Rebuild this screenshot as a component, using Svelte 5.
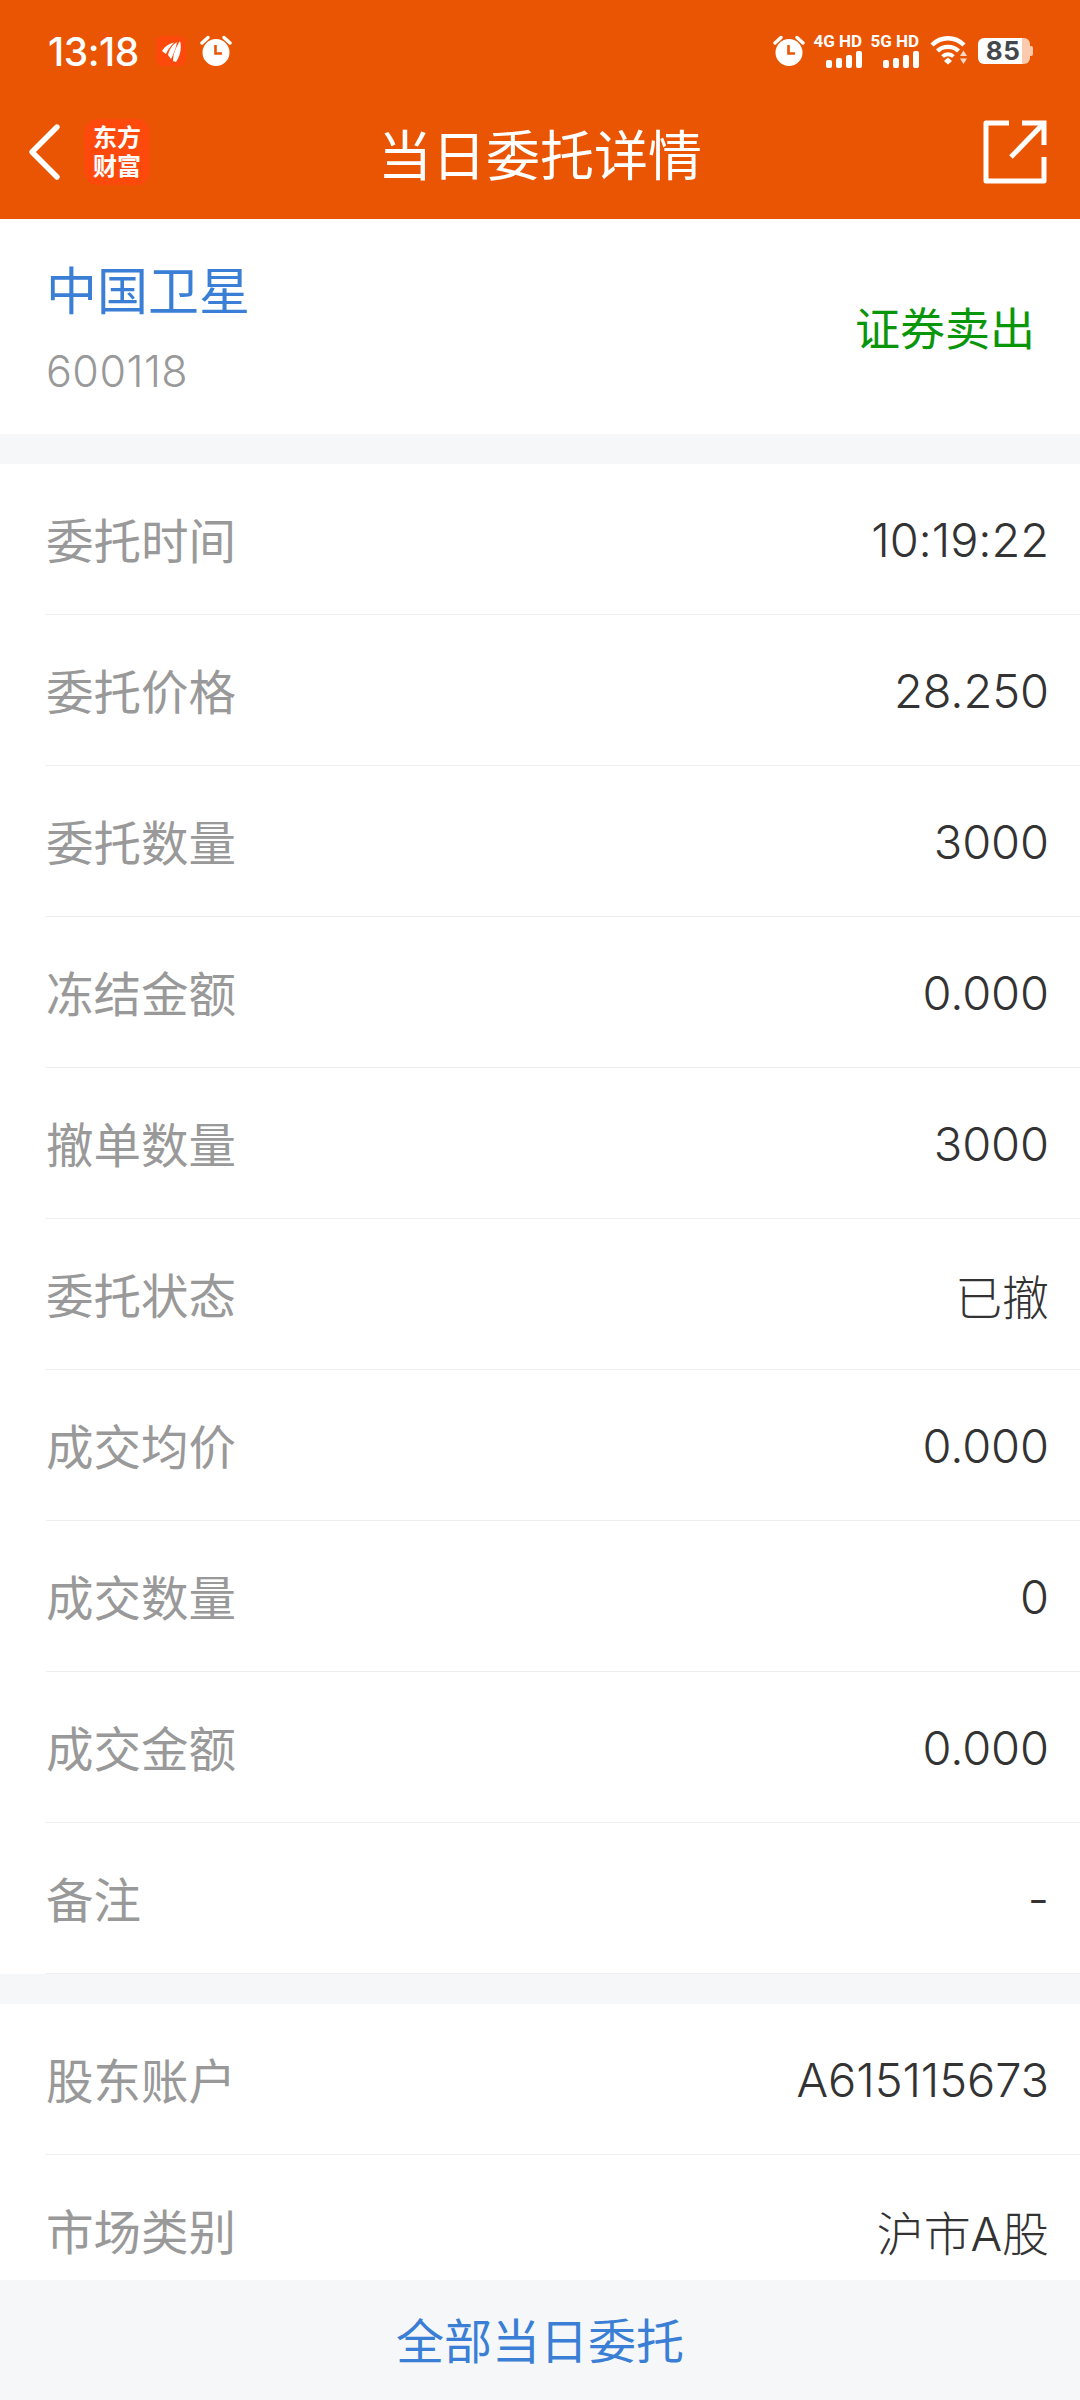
<script>
	const mainRows = [
		['委托时间', '10:19:22'],
		['委托价格', '28.250'],
		['委托数量', '3000'],
		['冻结金额', '0.000'],
		['撤单数量', '3000'],
		['委托状态', '已撤'],
		['成交均价', '0.000'],
		['成交数量', '0'],
		['成交金额', '0.000'],
		['备注', '-']
	];
	const accountRows = [
		['股东账户', 'A615115673'],
		['市场类别', '沪市A股']
	];
</script>

{#snippet alarm()}
	<svg class="alarm" viewBox="0 0 32 32" width="32" height="32">
		<circle cx="16" cy="17.5" r="13.5" fill="#fff" />
		<path d="M2 8 L8 2.5 M30 8 L24 2.5" stroke="#fff" stroke-width="3.4" stroke-linecap="round" />
		<path d="M15.5 10 V18.5 H22" fill="none" stroke="#ea5504" stroke-width="2.6" />
	</svg>
{/snippet}

{#snippet signal(label)}
	<div class="signal">
		<span class="signal-label">{label} HD</span>
		<svg viewBox="0 0 36 17" width="36" height="17">
			<rect x="0" y="9" width="6" height="8" rx="2" fill="#fff" />
			<rect x="10" y="7" width="6" height="10" rx="2" fill="#fff" />
			<rect x="20" y="4" width="6" height="13" rx="2" fill="#fff" />
			<rect x="30" y="0" width="6" height="17" rx="2" fill="#fff" />
		</svg>
	</div>
{/snippet}

<div class="page">
	<header class="top">
		<div class="statusbar">
			<div class="status-left">
				<span class="clock">13:18</span>
				<span class="app-badge">
					<svg viewBox="0 0 30 30" width="30" height="30">
						<path d="M6 15 C9 10 13 8 18 6.5 C15 10 12 13 10 18 Z" fill="#fff" />
						<path d="M12 19 C13 14 16 9 21 6 C20 11 19 15 15 23 Z" fill="#fff" />
						<path d="M17 25 C17 18 20 11 24 5 C26 12 24 20 20 26 Z" fill="#fff" />
					</svg>
				</span>
				{@render alarm()}
			</div>
			<div class="status-right">
				{@render alarm()}
				{@render signal('4G')}
				{@render signal('5G')}
				<svg class="wifi" viewBox="0 0 38 30" width="38" height="30">
					<path d="M2 9 C11 0 25 0 34 9" fill="none" stroke="#fff" stroke-width="4.4" />
					<path d="M7.5 15 C13 9.5 23 9.5 28.5 15" fill="none" stroke="#fff" stroke-width="4.4" />
					<path d="M12.5 20.5 C15.5 17.5 20.5 17.5 23.5 20.5" fill="none" stroke="#fff" stroke-width="3.8" />
					<path d="M14 25 L18 21.5 L22 25 L18 28.5 Z" fill="#fff" />
					<path d="M30 20 L33.5 14.5 L37 20 Z M30 22.5 H37 L33.5 28 Z" fill="#fbd9c6" />
				</svg>
				<div class="battery">
					<span class="battery-level">85</span>
					<span class="battery-cap"></span>
				</div>
			</div>
		</div>
		<nav class="navbar">
			<div class="nav-left">
				<svg viewBox="0 0 36 58" width="36" height="58">
					<path d="M31 4 L6 29 L31 54" fill="none" stroke="#fff" stroke-width="5.4" stroke-linecap="round" stroke-linejoin="round" />
				</svg>
				<div class="logo">
					<span>东方</span>
					<span>财富</span>
				</div>
			</div>
			<h1>当日委托详情</h1>
			<svg class="share" viewBox="0 0 64 64" width="64" height="64">
				<path d="M26 3 H3 V61 H61 V37" fill="none" stroke="#fff" stroke-width="5" stroke-linejoin="round" />
				<path d="M39 3 H61 V25" fill="none" stroke="#fff" stroke-width="5" />
				<path d="M28 37 L60 4" fill="none" stroke="#fff" stroke-width="5" />
			</svg>
		</nav>
	</header>

	<main class="content">
		<section class="stock">
			<div class="stock-info">
				<div class="stock-name">中国卫星</div>
				<div class="stock-code">600118</div>
			</div>
			<div class="trade-type">证券卖出</div>
		</section>

		<section class="group">
			{#each mainRows as [label, value]}
				<div class="row">
					<span class="label">{label}</span>
					<span class="value">{value}</span>
				</div>
			{/each}
		</section>

		<section class="group">
			{#each accountRows as [label, value]}
				<div class="row">
					<span class="label">{label}</span>
					<span class="value">{value}</span>
				</div>
			{/each}
		</section>
	</main>

	<footer class="footer">全部当日委托</footer>
</div>

<style>
	:global(body) {
		margin: 0;
		background: #fff;
	}

	.page {
		display: flex;
		flex-direction: column;
		height: 2400px;
		overflow: hidden;
		font-family: Inter, Roboto, "Noto Sans CJK SC", sans-serif;
		background: #f5f7f9;
	}

	.top {
		flex: none;
		height: 219px;
		background: #ea5504;
		color: #fff;
	}

	.statusbar {
		display: flex;
		justify-content: space-between;
		align-items: center;
		height: 102px;
		padding: 0 50px 0 48px;
		box-sizing: border-box;
	}

	.status-left,
	.status-right {
		display: flex;
		align-items: center;
	}

	.clock {
		font-size: 39px;
		font-weight: 500;
		width: 108px;
		letter-spacing: -0.5px;
	}

	.app-badge {
		display: flex;
		width: 30px;
		height: 30px;
		margin-right: 14px;
		border-radius: 6px;
		background: #fd4a0c;
	}

	.status-right {
		gap: 9px;
	}

	.signal {
		display: flex;
		flex-direction: column;
		align-items: flex-end;
		gap: 2px;
		width: 48px;
	}

	.signal-label {
		font-family: "Roboto", sans-serif;
		font-size: 17px;
		line-height: 15px;
		font-weight: 700;
		white-space: nowrap;
	}

	.wifi {
		margin-left: 2px;
	}

	.battery {
		position: relative;
		width: 52px;
		height: 26px;
		border-radius: 6px;
		margin-left: 1px;
		background: linear-gradient(to right, #fff 85%, #fbc9ae 85%);
		color: #44484c;
		font-size: 26px;
		font-weight: 700;
		line-height: 26px;
		text-align: center;
	}

	.battery-level {
		display: block;
		width: 50px;
		letter-spacing: 0.5px;
	}

	.battery-cap {
		position: absolute;
		left: 52px;
		top: 8px;
		width: 3px;
		height: 10px;
		border-radius: 0 2px 2px 0;
		background: #fbc9ae;
	}

	.navbar {
		position: relative;
		display: flex;
		justify-content: space-between;
		align-items: center;
		height: 100px;
		padding: 0 33px 0 26px;
	}

	.nav-left {
		display: flex;
		align-items: center;
		gap: 22px;
	}

	.logo {
		display: flex;
		flex-direction: column;
		align-items: center;
		justify-content: center;
		width: 66px;
		height: 66px;
		border-radius: 14px;
		background: #fd4a0c;
		font-size: 24px;
		line-height: 29px;
		font-weight: 700;
	}

	h1 {
		position: absolute;
		left: 0;
		right: 0;
		margin: 0;
		text-align: center;
		font-size: 54px;
		font-weight: 400;
	}

	.content {
		flex: 1;
		overflow: hidden;
	}

	.stock {
		display: flex;
		justify-content: space-between;
		align-items: center;
		height: 215px;
		padding: 0 45px 0 46px;
		box-sizing: border-box;
		background: #fff;
	}

	.stock-info {
		padding-top: 5px;
	}

	.stock-name {
		color: #3a7fd5;
		font-size: 51px;
		line-height: 60px;
	}

	.stock-code {
		margin-top: 24px;
		color: #999;
		font-size: 43px;
		line-height: 50px;
		font-weight: 300;
		letter-spacing: 0.5px;
	}

	.trade-type {
		color: #0a960a;
		font-size: 45px;
	}

	.group {
		margin-top: 30px;
		padding-left: 46px;
		background: #fff;
	}

	.row {
		display: flex;
		justify-content: space-between;
		align-items: center;
		height: 151px;
		padding-right: 31px;
		box-sizing: border-box;
		border-bottom: 1px solid #eee;
		font-size: 47.5px;
	}

	.label {
		color: #999;
		margin-top: -2px;
	}

	.value {
		color: #333;
		font-size: 47px;
		font-weight: 300;
		letter-spacing: -0.1px;
	}

	.footer {
		flex: none;
		height: 120px;
		padding-top: 3px;
		box-sizing: border-box;
		line-height: 117px;
		text-align: center;
		background: #f5f7f9;
		color: #3a7fd5;
		font-size: 48px;
	}
</style>
